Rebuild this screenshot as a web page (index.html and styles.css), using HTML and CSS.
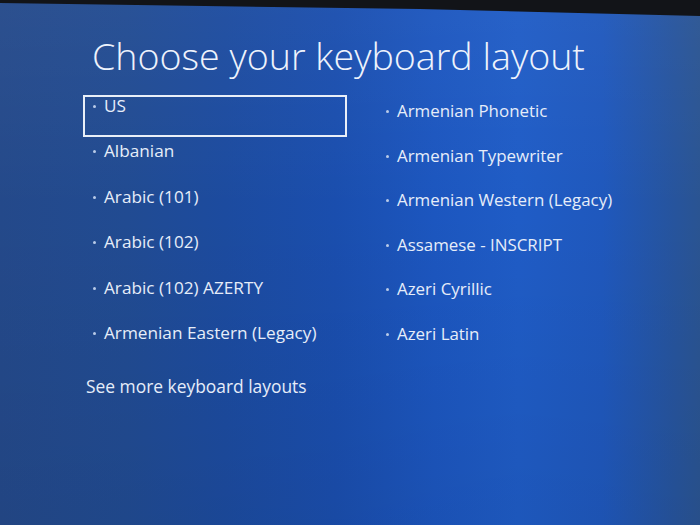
FILE: index.html
```html
<!DOCTYPE html>
<html>
<head>
<meta charset="utf-8">
<link rel="stylesheet" href="styles.css">
</head>
<body>
<div class="screen">
  <div class="bezel"></div>
  <div class="content">
    <h1 class="title">Choose your keyboard layout</h1>
    <div class="columns">
      <ul class="col col-left">
        <li class="item selected"><span class="dot"></span>US</li>
        <li class="item"><span class="dot"></span>Albanian</li>
        <li class="item"><span class="dot"></span>Arabic (101)</li>
        <li class="item"><span class="dot"></span>Arabic (102)</li>
        <li class="item"><span class="dot"></span>Arabic (102) AZERTY</li>
        <li class="item"><span class="dot"></span>Armenian Eastern (Legacy)</li>
      </ul>
      <ul class="col col-right">
        <li class="item"><span class="dot"></span>Armenian Phonetic</li>
        <li class="item"><span class="dot"></span>Armenian Typewriter</li>
        <li class="item"><span class="dot"></span>Armenian Western (Legacy)</li>
        <li class="item"><span class="dot"></span>Assamese - INSCRIPT</li>
        <li class="item"><span class="dot"></span>Azeri Cyrillic</li>
        <li class="item"><span class="dot"></span>Azeri Latin</li>
      </ul>
    </div>
    <div class="more">See more keyboard layouts</div>
  </div>
</div>
</body>
</html>
```
FILE: styles.css
```css
html, body {
  margin: 0;
  padding: 0;
}
body {
  width: 700px;
  height: 525px;
  overflow: hidden;
  font-family: "Open Sans", "Noto Sans", sans-serif;
  color: #e6edf9;
}
.screen {
  position: relative;
  width: 700px;
  height: 525px;
  background:
    linear-gradient(180deg, rgba(255,255,255,0.04) 0%, rgba(0,0,0,0) 40%, rgba(0,0,0,0.06) 100%),
    linear-gradient(90deg, #24498a 0%, #214b92 18%, #1c4b9f 32%, #1a4eae 48%, #1c56bf 62%, #1f5cc6 74%, #1f58bd 86%, #26549e 96%, #2a5492 100%);
  overflow: hidden;
}
.bezel {
  position: absolute;
  left: 0;
  top: 0;
  width: 700px;
  height: 20px;
  background: #121418;
  clip-path: polygon(0 0, 100% 0, 100% 16px, 60% 9px, 0 3px);
}
.content {
  padding: 33px 0 0 83px;
}
.title {
  margin: 0 0 0 9px;
  font-family: "Open Sans", "Noto Sans", sans-serif;
  font-weight: 300;
  font-size: 37.6px;
  line-height: 45px;
  color: #eef3fc;
}
.columns {
  display: flex;
  gap: 36px;
  margin-top: 17px;
}
.col {
  list-style: none;
  margin: 0;
  padding: 0;
  width: 264px;
  display: flex;
  flex-direction: column;
  gap: 3.4px;
}
.col-right {
  padding-top: 5px;
  gap: 2.6px;
}
.item {
  box-sizing: border-box;
  height: 42px;
  padding: 0 0 0 8px;
  border: 2px solid transparent;
  font-size: 17.2px;
  line-height: 18px;
  display: flex;
  align-items: flex-start;
  white-space: nowrap;
}
.col-right .item {
  padding-left: 1px;
  font-size: 16.9px;
}
.item.selected {
  border-color: #e9eff8;
}
.dot {
  width: 3px;
  height: 3px;
  border-radius: 50%;
  background: #b9cbe8;
  margin: 8px 8px 0 0;
  flex: none;
}
.more {
  margin-top: 11px;
  margin-left: 3px;
  font-size: 17.4px;
  line-height: 20px;
}
```
